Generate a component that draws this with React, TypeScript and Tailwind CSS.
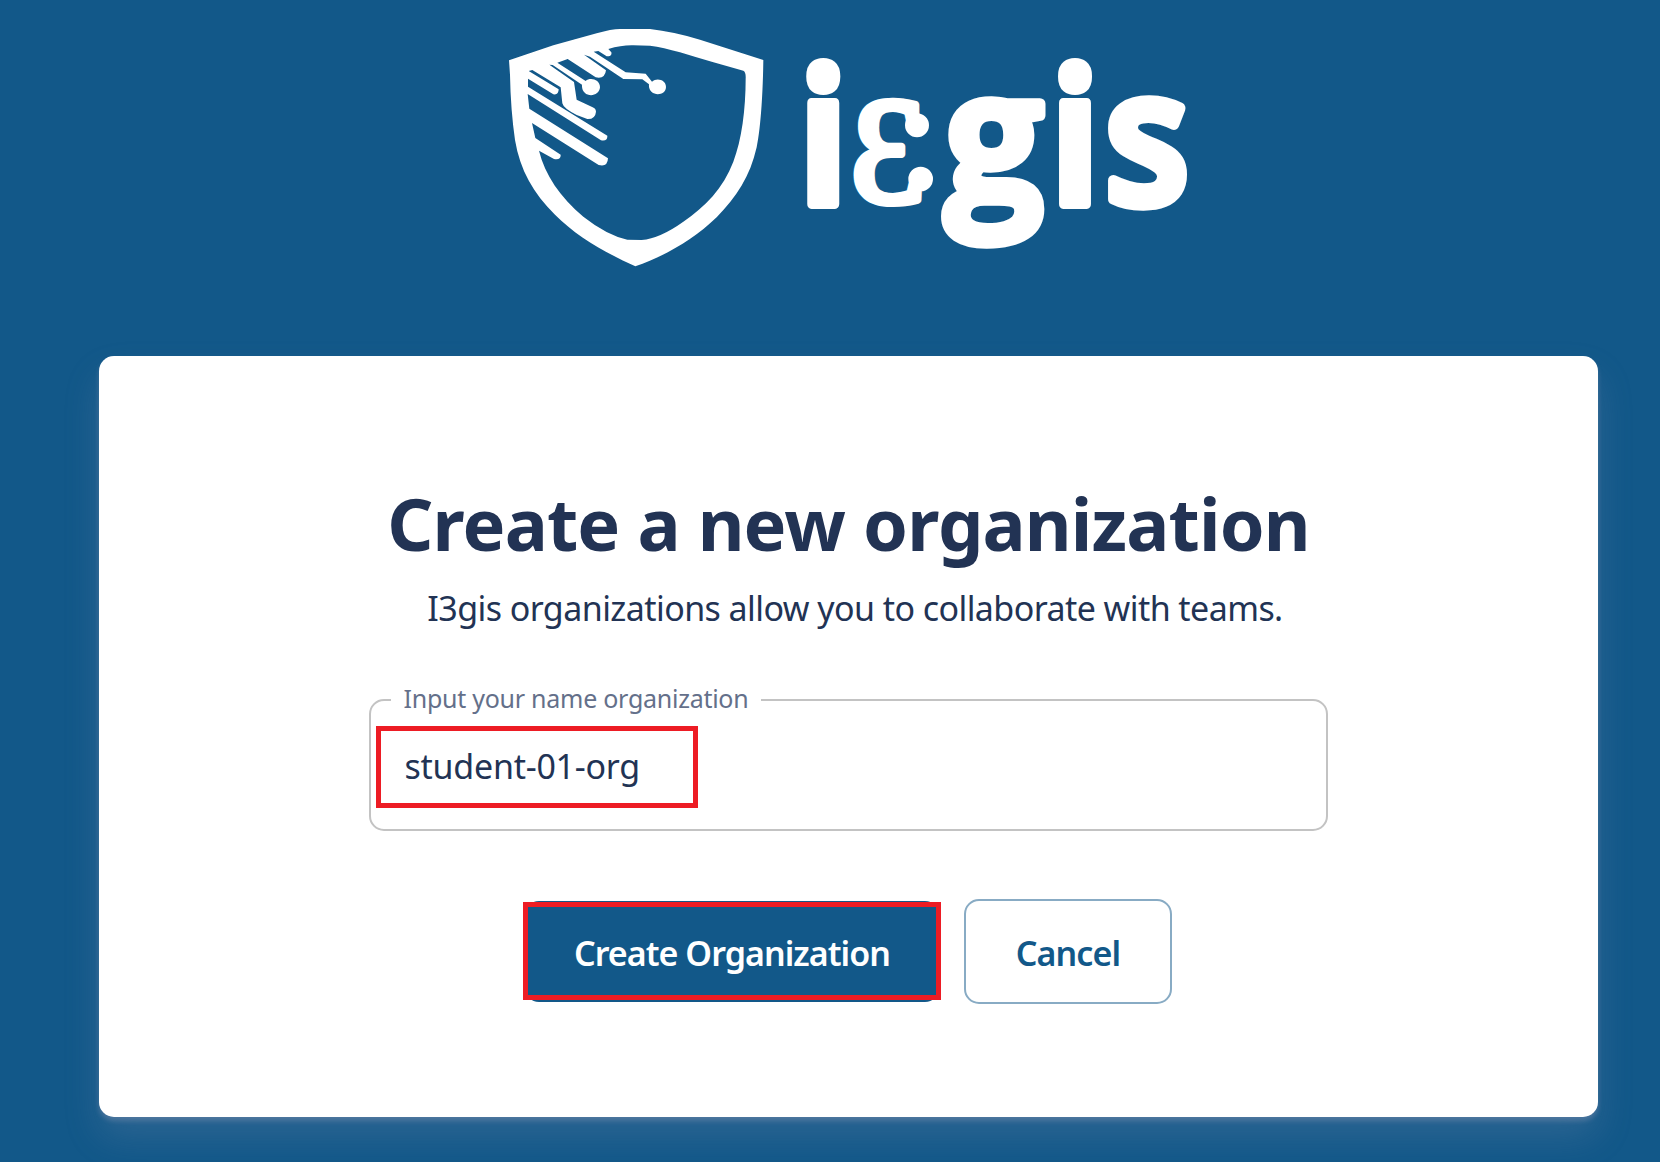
function Logo() {
  return (
    <svg className="h-[250px] w-[700px] overflow-visible" viewBox="0 0 2100 750" fill="#fff" role="img" aria-label="i3gis">
      <path
        fillRule="evenodd"
        d="M27 121 L160 76 L290 40 Q335 27 360 27 L450 27 Q520 35 600 59 L790 120 C789 210 783 320 770 382 C750 470 710 530 650 592 C580 660 490 710 406 739 C320 700 230 650 165 584 C100 520 60 450 45 360 Q32 270 30 165 Z
        M325 87 Q365 75 400 76 L450 77 Q490 82 540 97 Q640 128 730 152 Q738 156 737 175 C737 270 725 360 700 425 C670 505 615 560 550 605 Q480 655 425 660 L382 659 Q320 645 250 590 C180 530 135 465 117 392 L162 417 Q183 421 182 404 L106 354 L96 309 L296 435 Q323 442 324 415 L88 266 L83 222 L303 361 Q323 365 322 347 L84 200 L84 176 L160 223 Q176 226 176 208 L86 153 L97 150 L182 202 L187 250 Q190 265 230 285 L262 297 Q286 298 288 275 Q287 265 278 262 L230 239 L222 186 L148 134 L158 135 L246 194 C243 235 298 234 300 202 C300 178 270 171 257 183 L172 128 L203 117 L287 172 Q315 178 318 151 L252 104 L270 110 L370 177 L427 178 L447 193 C443 230 497 232 498 201 C498 180 471 172 456 185 L437 161 L377 157 L281 95 L295 93 L320 109 Q337 109 334 97 Z"
      />
      <g stroke="#fff" strokeWidth="30" strokeLinejoin="round" fontFamily="'Open Sans', sans-serif" fontWeight="600">
        <text transform="translate(898 551) scale(0.85 1)" fontSize="555" fontWeight="700">i</text>
        <text transform="translate(1276 547) scale(-0.98 1)" fontFamily="'Liberation Serif', serif" fontWeight="400" fontSize="450" strokeWidth="24">3</text>
        <circle cx="1251" cy="316" r="21" />
        <circle cx="1262" cy="477" r="22" />
        <text transform="translate(1335 541) scale(0.99 1)" fontSize="534" strokeWidth="34">g</text>
        <text transform="translate(1653 551) scale(0.85 1)" fontSize="555" fontWeight="700">i</text>
        <text transform="translate(1815 550) scale(0.93 1)" fontSize="556" strokeWidth="34">s</text>
      </g>
    </svg>
  );
}

export default function App() {
  return (
    <main className="flex h-[1162px] w-[1660px] flex-col overflow-hidden bg-[#125889] pl-[99px] pt-5 font-['Noto_Sans',sans-serif] text-[#223354]">
      <div className="ml-[401px]">
        <Logo />
      </div>
      <section className="mt-[86px] flex h-[761px] w-[1499px] shrink-0 flex-col items-center rounded-[15px] bg-white pt-[117px] shadow-[0_20px_36px_rgba(159,162,191,0.18),0_4px_5px_rgba(159,162,191,0.32)]">
        <h1 className="h-[100px] whitespace-nowrap text-[72px] font-bold leading-[100px] tracking-[-0.82px]">
          Create a new organization
        </h1>
        <p className="ml-[13px] mt-[10px] h-[50px] whitespace-nowrap text-[34px] leading-[50px] tracking-[-0.57px]">
          I3gis organizations allow you to collaborate with teams.
        </p>
        <div className="relative -ml-px mt-[66px] h-[132px] w-[959px] rounded-[15px] border-2 border-[#c3c3c3]">
          <label
            htmlFor="organization"
            className="absolute -top-[21px] left-5 h-9 w-[370px] whitespace-nowrap bg-white pl-[13px] text-[25px] leading-9 tracking-[-0.26px] text-[#64708a]"
          >
            Input your name organization
          </label>
          <input
            id="organization"
            defaultValue="student-01-org"
            className="h-full w-full bg-transparent pl-[34px] pt-px text-[34px] tracking-[-0.25px] outline-none"
          />
          <div className="absolute left-[5px] top-[25px] h-[82px] w-[322px] border-[5px] border-[#ed1c24]" />
        </div>
        <div className="mt-[68px] flex w-full items-center pl-[426px]">
          <button className="relative h-[101px] w-[414px] whitespace-nowrap rounded-[14px] bg-[#125889] pt-1 text-[34px] font-semibold tracking-[-0.95px] text-white">
            Create Organization
            <span className="absolute -left-[2px] top-px h-[98px] w-[418px] border-[5px] border-[#ed1c24]" />
          </button>
          <button className="ml-[25px] h-[105px] w-[208px] rounded-[15px] border-2 border-[#88abc4] pt-1 text-[34px] font-semibold tracking-[-0.9px] text-[#125889]">
            Cancel
          </button>
        </div>
      </section>
    </main>
  );
}
